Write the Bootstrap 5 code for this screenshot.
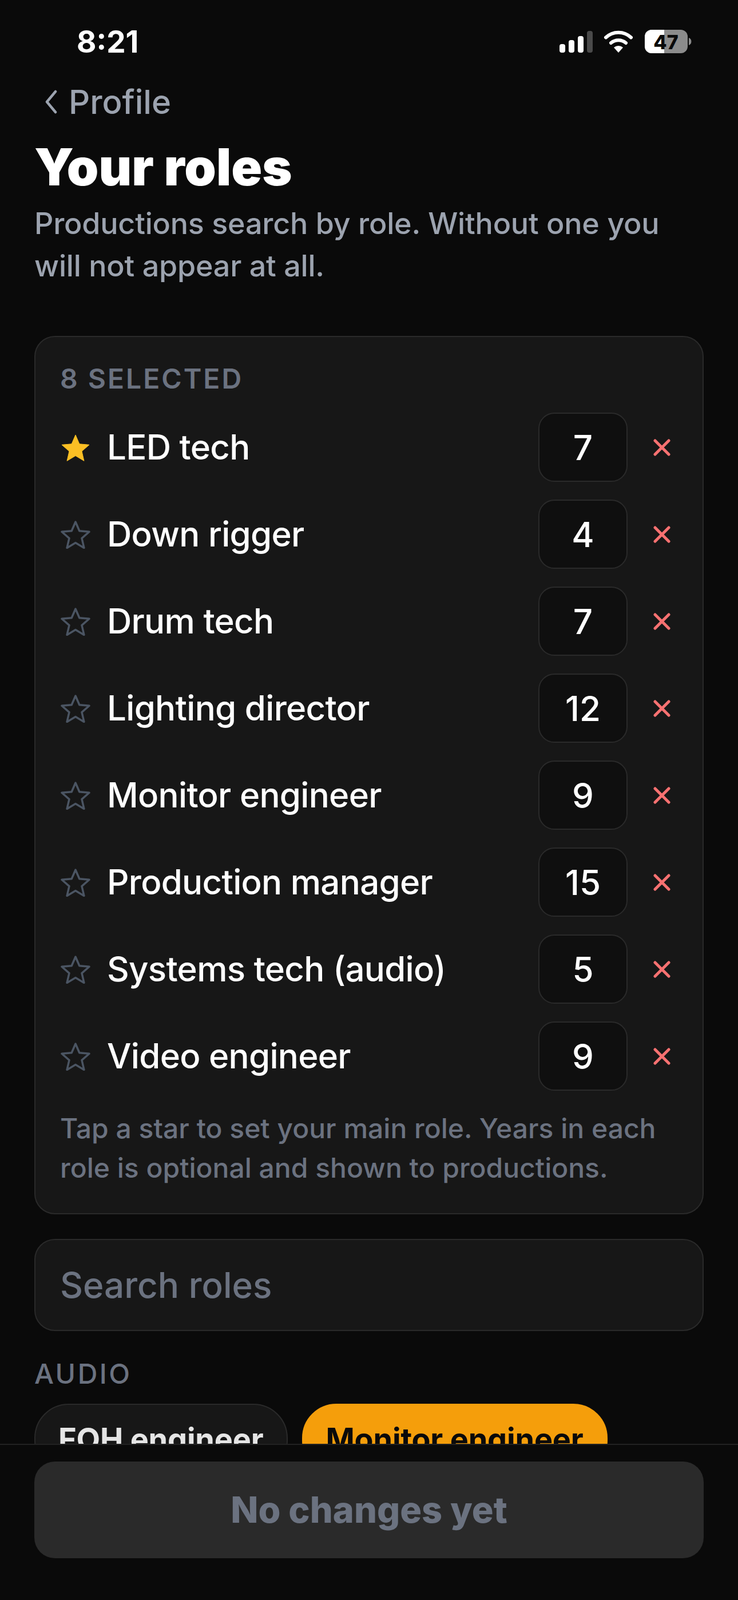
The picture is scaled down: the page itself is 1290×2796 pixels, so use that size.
<!DOCTYPE html>
<html lang="en">
<head>
    <meta charset="UTF-8">
    <meta name="viewport" content="width=device-width, initial-scale=1.0">
    <title>Your roles</title>
    <link rel="stylesheet" href="https://cdn.jsdelivr.net/npm/bootstrap@5.3.0/dist/css/bootstrap.min.css">
    <style>
        html, body {
            height: 100%;
            margin: 0;
        }
        body {
            background-color: #0a0a0a;
            color: #fff;
            font-family: Inter, "Liberation Sans", sans-serif;
            overflow: hidden;
        }
        .screen {
            height: 2796px;
        }
        .status-bar {
            height: 138px;
            padding: 8px 80px 0 134px;
            flex-shrink: 0;
        }
        .status-time {
            font-size: 53px;
            font-weight: 700;
            line-height: 1;
        }
        .scroll-area {
            min-height: 0;
            overflow: hidden;
            padding: 8px 60px 0;
        }
        .back-link {
            height: 64px;
            margin-left: 18px;
            gap: 20px;
            color: #9ca3af;
            font-size: 58px;
            font-weight: 500;
            line-height: 64px;
        }
        .page-title {
            margin: 32px 0 0;
            font-size: 89px;
            font-weight: 900;
            line-height: 100px;
        }
        .page-sub {
            margin: 12px 0 0;
            color: #9ca3af;
            font-size: 52px;
            font-weight: 500;
            line-height: 74px;
            letter-spacing: -0.2px;
        }
        .roles-panel {
            margin-top: 85px;
            padding: 43px 44px 45px 43px;
            background: #171717;
            border: 2px solid #2a2a2a;
            border-radius: 36px;
        }
        .panel-label {
            color: #6b7280;
            font-size: 48px;
            font-weight: 600;
            letter-spacing: 3px;
            line-height: 60px;
        }
        .role-list {
            margin-top: 29px;
            gap: 31px;
        }
        .role-row {
            height: 121px;
        }
        .role-star {
            width: 52px;
            height: 50px;
            margin-left: 1px;
            flex-shrink: 0;
        }
        .role-name {
            margin-left: 29px;
            padding-bottom: 2px;
            font-size: 60px;
            font-weight: 550;
            letter-spacing: -0.7px;
        }
        .form-control.years-box {
            width: 156px;
            height: 121px;
            padding: 0;
            background: #0f0f0f;
            border: 2px solid #2a2a2a;
            border-radius: 28px;
            color: #fff;
            font-size: 60px;
            font-weight: 500;
            text-align: center;
        }
        .role-remove {
            width: 30px;
            height: 30px;
            margin: 0 12px 0 45px;
            flex-shrink: 0;
        }
        .panel-note {
            margin: 31px 0 0;
            color: #6b7280;
            font-size: 48px;
            font-weight: 500;
            line-height: 69px;
        }
        .form-control.role-search {
            height: 161px;
            margin-top: 43px;
            padding: 0 43px;
            background: #171717;
            border: 2px solid #2a2a2a;
            border-radius: 36px;
            color: #fff;
            font-size: 62px;
            font-weight: 550;
        }
        .role-search::placeholder {
            color: #6b7280;
            opacity: 1;
        }
        .group-label {
            margin-top: 45px;
            color: #6b7280;
            font-size: 48px;
            font-weight: 500;
            letter-spacing: 3.500px;
            line-height: 60px;
        }
        .chip-row {
            margin-top: 22px;
            gap: 25px;
        }
        .btn.role-chip {
            padding: 20px 40px;
            border-radius: 60px;
            font-size: 54px;
            font-weight: 700;
            letter-spacing: -0.2px;
            line-height: 80px;
            white-space: nowrap;
        }
        .chip-off {
            background: #171717;
            border: 2px solid #2a2a2a;
            color: #e5e5e5;
        }
        .chip-on {
            background: #f59e0b;
            border: 2px solid #f59e0b;
            color: #0a0a0a;
        }
        .save-bar {
            height: 273px;
            flex-shrink: 0;
            padding: 29px 60px 0;
            background: #0a0a0a;
            border-top: 2px solid #222;
        }
        .btn.save-btn {
            height: 169px;
            background: #2a2a2a;
            border: 0;
            border-radius: 36px;
            color: #6b7280;
            font-size: 63px;
            font-weight: 800;
            opacity: 1;
        }
    </style>
</head>
<body>
    <div class="screen d-flex flex-column">
        <div class="status-bar d-flex align-items-center justify-content-between">
            <div class="status-time">8:21</div>
            <svg width="232" height="42" viewBox="0 0 232 42">
                <rect x="0" y="25" width="10" height="15" rx="4" fill="#fff"/>
                <rect x="16" y="18" width="10" height="22" rx="4" fill="#fff"/>
                <rect x="32" y="11" width="10" height="29" rx="4" fill="#fff"/>
                <rect x="48" y="2" width="10" height="38" rx="4" fill="#4a4a4a"/>
                <path d="M81 13.500a32 32 0 0 1 44 0" fill="none" stroke="#fff" stroke-width="6" stroke-linecap="round"/>
                <path d="M90 23a20 20 0 0 1 26 0" fill="none" stroke="#fff" stroke-width="6" stroke-linecap="round"/>
                <path d="M95 31a12 12 0 0 1 16 0l-8 9z" fill="#fff"/>
                <rect x="149" y="0" width="75" height="41" rx="12" fill="#8c8c8c"/>
                <path d="M161 0h22v41h-22a12 12 0 0 1-12-12V12a12 12 0 0 1 12-12z" fill="#fff"/>
                <path d="M226 14a7 7 0 0 1 0 13z" fill="#8c8c8c"/>
                <text x="186" y="34" text-anchor="middle" font-family="Inter, sans-serif" font-size="34" font-weight="800" fill="#0a0a0a">47</text>
            </svg>
        </div>

        <div class="scroll-area flex-grow-1">
            <div class="back-link d-flex align-items-center">
                <svg width="22" height="42" viewBox="0 0 22 42"><path d="M19 3L4 21l15 18" fill="none" stroke="#9ca3af" stroke-width="4.500" stroke-linecap="round" stroke-linejoin="round"/></svg>
                <span>Profile</span>
            </div>
            <h1 class="page-title">Your roles</h1>
            <p class="page-sub">Productions search by role. Without one you will not appear at all.</p>

            <div class="roles-panel">
                <div class="panel-label">8 SELECTED</div>
                <div class="role-list d-flex flex-column" id="role-list"></div>
                <p class="panel-note">Tap a star to set your main role. Years in each role is optional and shown to productions.</p>
            </div>

            <input type="text" class="form-control role-search" placeholder="Search roles">

            <div class="group-label">AUDIO</div>
            <div class="chip-row d-flex">
                <button class="btn role-chip chip-off">FOH engineer</button>
                <button class="btn role-chip chip-on">Monitor engineer</button>
            </div>
        </div>

        <div class="save-bar">
            <button class="btn save-btn w-100" disabled>No changes yet</button>
        </div>
    </div>

    <script src="https://cdn.jsdelivr.net/npm/bootstrap@5.3.0/dist/js/bootstrap.bundle.min.js"></script>
    <script>
        const roles = [
            ["LED tech", 7, true],
            ["Down rigger", 4],
            ["Drum tech", 7],
            ["Lighting director", 12],
            ["Monitor engineer", 9],
            ["Production manager", 15],
            ["Systems tech (audio)", 5],
            ["Video engineer", 9]
        ];
        const starPath = "M26 3l6.800 15.800 17.200 1.500-13 11.300 3.900 16.800L26 39.500 11.100 48.400 15 31.600 2 20.300l17.200-1.500z";

        document.getElementById("role-list").innerHTML = roles.map(([name, years, main]) => `
            <div class="role-row d-flex align-items-center">
                <svg class="role-star" viewBox="0 0 52 50">
                    <path d="${starPath}" fill="${main ? "#fbbf24" : "none"}" stroke="${main ? "#fbbf24" : "#4b5563"}" stroke-width="${main ? 1 : 3.5}" stroke-linejoin="round"/>
                </svg>
                <span class="role-name flex-grow-1">${name}</span>
                <input type="text" class="form-control years-box" value="${years}">
                <svg class="role-remove" viewBox="0 0 30 30">
                    <path d="M3 3l24 24M27 3L3 27" stroke="#f87171" stroke-width="5" stroke-linecap="round"/>
                </svg>
            </div>
        `).join("");
    </script>
</body>
</html>
